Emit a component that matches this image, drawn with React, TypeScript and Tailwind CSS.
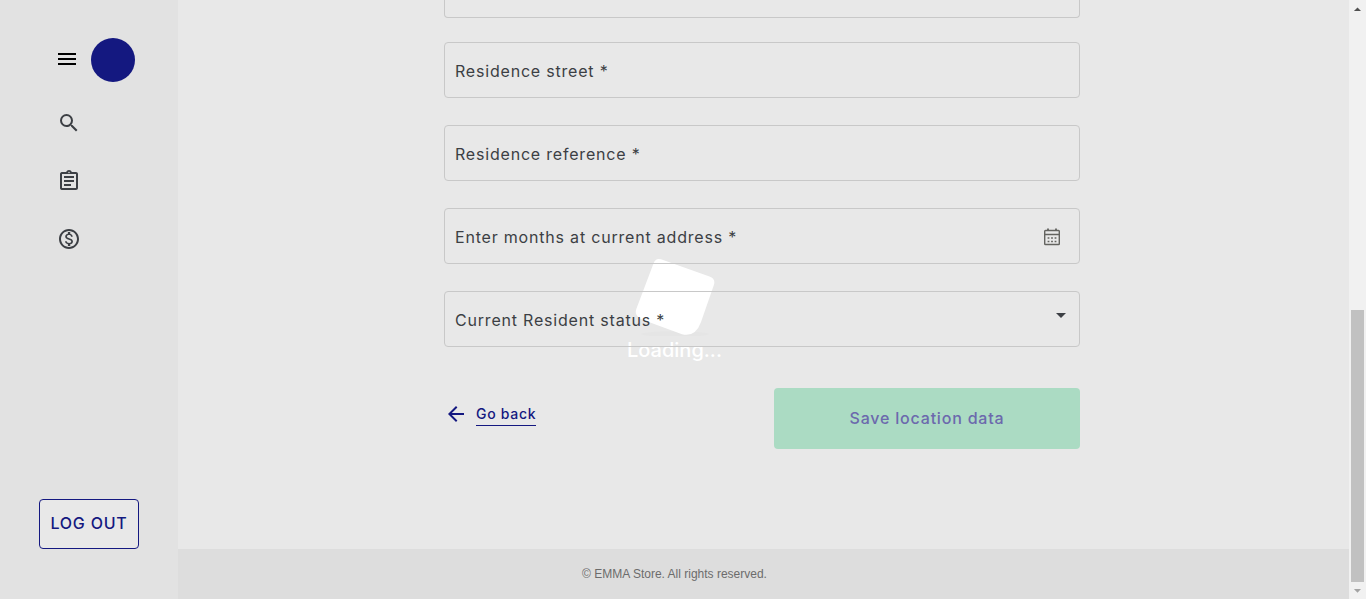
import type { ReactNode } from "react";
import {
  MdMenu,
  MdSearch,
  MdOutlineAssignment,
  MdOutlineMonetizationOn,
  MdArrowBack,
  MdArrowDropDown,
  MdArrowDropUp,
} from "react-icons/md";

function Field({ id, label, children }: { id: string; label: string; children: ReactNode }) {
  return (
    <div className="flex h-14 items-center rounded border border-[#c8c8c8] pl-2.5 pr-3 pt-0.5">
      <label htmlFor={id} className="shrink-0 text-base tracking-wider text-[#3c3f44]">
        {label}
      </label>
      {children}
    </div>
  );
}

function CalendarIcon() {
  return (
    <svg viewBox="0 0 18 18" className="size-[18px] shrink-0" fill="none" stroke="#63635f" aria-hidden="true">
      <path d="M2.500 2.500h13q.8 0 .8.8v12.400q0 .8-.8.8h-13q-.8 0-.8-.8V3.300q0-.8.8-.8zM1.700 6.500h14.600" strokeWidth="1.4" />
      <path d="M5 .5v2M13 .5v2" strokeWidth="1.8" />
      <path d="M4.600 10h1.800M8.100 10h1.800M11.600 10h1.800M4.600 13.500h1.800M8.100 13.500h1.800M11.600 13.500h1.800" strokeWidth="1.6" />
    </svg>
  );
}

const inputClass = "h-full min-w-0 flex-1 bg-transparent text-base outline-none";

function Sidebar() {
  return (
    <aside className="flex w-[178px] shrink-0 flex-col bg-[#e2e2e2]">
      <div className="flex items-center gap-3 pl-[55px] pt-[38px]">
        <button type="button" aria-label="Menu" className="pb-0.5 text-black">
          <MdMenu className="size-6" />
        </button>
        <span className="size-11 rounded-full bg-[#141880]" />
      </div>
      <nav className="flex flex-col items-start gap-[34px] pl-[57px] pt-[29px] text-[#3c3f44]">
        <a href="#search" aria-label="Search"><MdSearch className="size-6" /></a>
        <a href="#requests" aria-label="Requests"><MdOutlineAssignment className="size-6" /></a>
        <a href="#payments" aria-label="Payments"><MdOutlineMonetizationOn className="size-6" /></a>
      </nav>
      <button
        type="button"
        className="mx-auto mb-[50px] mt-auto h-[50px] w-[100px] whitespace-nowrap rounded border border-[#141880] bg-[#e8e8e8] pb-0.5 text-base font-medium tracking-wider text-[#141880]"
      >
        LOG OUT
      </button>
    </aside>
  );
}

function Loader() {
  return (
    <div className="absolute left-0 right-[17px] top-64 flex flex-col items-center" role="status">
      <svg viewBox="0 0 90 80" className="h-20 w-[90px]" aria-hidden="true">
        <ellipse cx="45" cy="78" rx="34" ry="3" fill="#000" opacity=".01" />
        <path
          d="M31 3.300 79.500 20.600Q86 23 83.800 29.300L71 66Q65.500 81.500 52 78.300L12 63.500Q4 60 6.300 53L23.500 7.500Q25.500 1.500 31 3.300Z"
          fill="#fff"
        />
      </svg>
      <p className="text-xl font-medium leading-7 text-white">Loading...</p>
    </div>
  );
}

function Scrollbar() {
  return (
    <div className="flex w-[17px] shrink-0 flex-col items-center bg-[#f1f1f1]" aria-hidden="true">
      <MdArrowDropUp className="mt-px size-[17px] text-[#505050]" />
      <div className="mt-auto h-[272px] w-[13px] bg-[#c1c1c1]" />
      <MdArrowDropDown className="size-[17px] text-[#a3a3a3]" />
    </div>
  );
}

export default function App() {
  return (
    <div className="relative flex h-screen overflow-hidden bg-[#e8e8e8] font-['Inter',sans-serif]">
      <Sidebar />
      <Loader />
      <main className="relative flex min-w-0 flex-1 flex-col">
        <form className="mx-auto w-full max-w-[639px] pr-[3px]">
          <div className="h-[18px] rounded-b border border-t-0 border-[#c8c8c8]" />
          <div className="mt-6 flex flex-col gap-[27px]">
            <Field id="street" label="Residence street *">
              <input id="street" className={inputClass} />
            </Field>
            <Field id="reference" label="Residence reference *">
              <input id="reference" className={inputClass} />
            </Field>
            <Field id="months" label="Enter months at current address *">
              <input id="months" className={inputClass} />
              <button type="button" aria-label="Choose date" className="mr-1.5">
                <CalendarIcon />
              </button>
            </Field>
            <Field id="status" label="Current Resident status *">
              <select id="status" className={`appearance-none ${inputClass}`} />
              <MdArrowDropDown className="-mr-1.5 mb-2.5 size-6 shrink-0 text-[#3c3f44]" />
            </Field>
          </div>
          <div className="mt-[41px] flex items-start justify-between">
            <a href="#back" className="flex items-center gap-2 pt-3.5 text-sm font-medium tracking-wider text-[#141880]">
              <MdArrowBack className="size-6" />
              <span className="border-b border-[#141880] leading-[22px]">Go back</span>
            </a>
            <button
              type="submit"
              className="h-[61px] w-[306px] rounded bg-[#abdbc3] pb-0.5 text-base font-medium tracking-wider text-[#6c69ad]"
            >
              Save location data
            </button>
          </div>
        </form>
        <footer className="mt-auto flex h-[50px] items-center justify-center bg-[#dddddd] pr-[178px] font-['Liberation_Sans',sans-serif] text-xs text-[#6c6c6c]">
          © EMMA Store. All rights reserved.
        </footer>
      </main>
      <Scrollbar />
    </div>
  );
}
